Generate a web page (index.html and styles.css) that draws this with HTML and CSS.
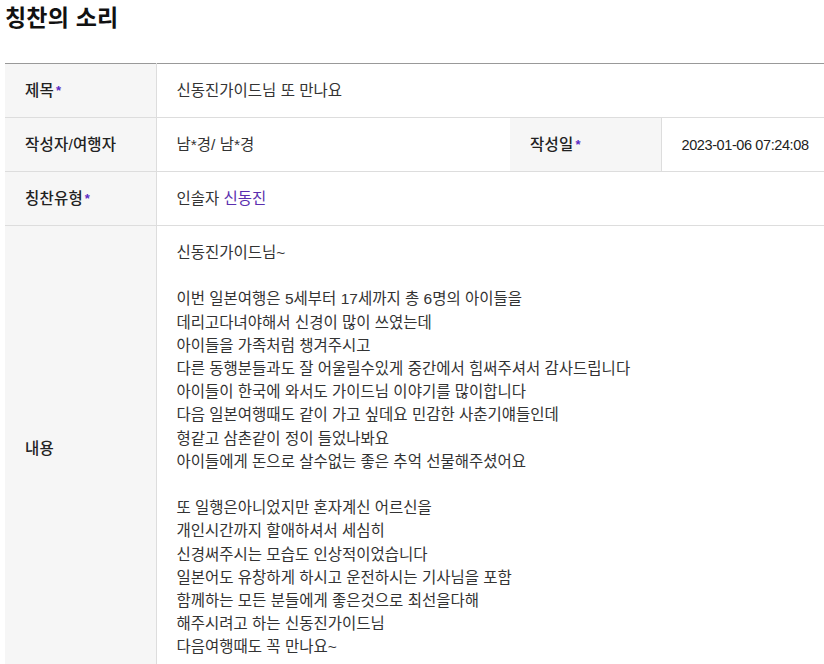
FILE: index.html
```html
<!DOCTYPE html>
<html lang="ko">
<head>
<meta charset="utf-8">
<link rel="stylesheet" href="styles.css">
</head>
<body>
<div class="page">
  <h2 class="title">칭찬의 소리</h2>
  <table class="board">
    <colgroup>
      <col class="c-label">
      <col class="c-value">
      <col class="c-label">
      <col class="c-rest">
    </colgroup>
    <tr>
      <th>제목<span class="req">*</span></th>
      <td colspan="3">신동진가이드님 또 만나요</td>
    </tr>
    <tr>
      <th>작성자/여행자</th>
      <td>남*경/ 남*경</td>
      <th>작성일<span class="req">*</span></th>
      <td class="date">2023-01-06 07:24:08</td>
    </tr>
    <tr>
      <th>칭찬유형<span class="req">*</span></th>
      <td colspan="3">인솔자 <span class="guide">신동진</span></td>
    </tr>
    <tr class="content-row">
      <th>내용</th>
      <td colspan="3" class="content">신동진가이드님~<br><br>이번 일본여행은 5세부터 17세까지 총 6명의 아이들을<br>데리고다녀야해서 신경이 많이 쓰였는데<br>아이들을 가족처럼 챙겨주시고<br>다른 동행분들과도 잘 어울릴수있게 중간에서 힘써주셔서 감사드립니다<br>아이들이 한국에 와서도 가이드님 이야기를 많이합니다<br>다음 일본여행때도 같이 가고 싶데요 민감한 사춘기얘들인데<br>형같고 삼촌같이 정이 들었나봐요<br>아이들에게 돈으로 살수없는 좋은 추억 선물해주셨어요<br><br>또 일행은아니었지만 혼자계신 어르신을<br>개인시간까지 할애하셔서 세심히<br>신경써주시는 모습도 인상적이었습니다<br>일본어도 유창하게 하시고 운전하시는 기사님을 포함<br>함께하는 모든 분들에게 좋은것으로 최선을다해<br>해주시려고 하는 신동진가이드님<br>다음여행때도 꼭 만나요~</td>
    </tr>
  </table>
</div>
</body>
</html>
```

FILE: styles.css
```css
html, body {
  margin: 0;
  padding: 0;
  background: #fff;
}
body {
  font-family: "Liberation Sans", "Noto Sans CJK KR", sans-serif;
  color: #333;
}
.page {
  padding: 0 0 0 5px;
}
.title {
  margin: 0;
  padding-top: 2px;
  height: 63px;
  box-sizing: border-box;
  font-size: 23px;
  font-weight: 700;
  color: #111;
  line-height: 32px;
  letter-spacing: 0.2px;
}
.board {
  width: 819px;
  border-collapse: collapse;
  table-layout: fixed;
  border-top: 1px solid #999;
  font-size: 15.5px;
}
.c-label { width: 151px; }
.c-value { width: 354px; }
.c-rest { width: 163px; }
.board th,
.board td {
  height: 54px;
  padding: 0 20px;
  border-bottom: 1px solid #ddd;
  box-sizing: border-box;
  vertical-align: middle;
  text-align: left;
  line-height: 20px;
}
.board th {
  background: #f6f6f6;
  color: #222;
  font-weight: 500;
  letter-spacing: 0.2px;
  border-right: 1px solid #ddd;
}
.board td {
  color: #333;
  font-weight: 400;
}
.req {
  color: #5a2bc4;
  font-size: 13px;
  font-weight: 700;
  margin-left: 2px;
  vertical-align: 1px;
}
.guide {
  color: #5b2fae;
}
.board td.date {
  font-size: 14.5px;
  letter-spacing: -0.4px;
  padding: 0 0 0 20px;
  color: #222;
}
.board td.content {
  vertical-align: top;
  line-height: 23.2px;
  padding-top: 15px;
  padding-bottom: 13px;
}
```
